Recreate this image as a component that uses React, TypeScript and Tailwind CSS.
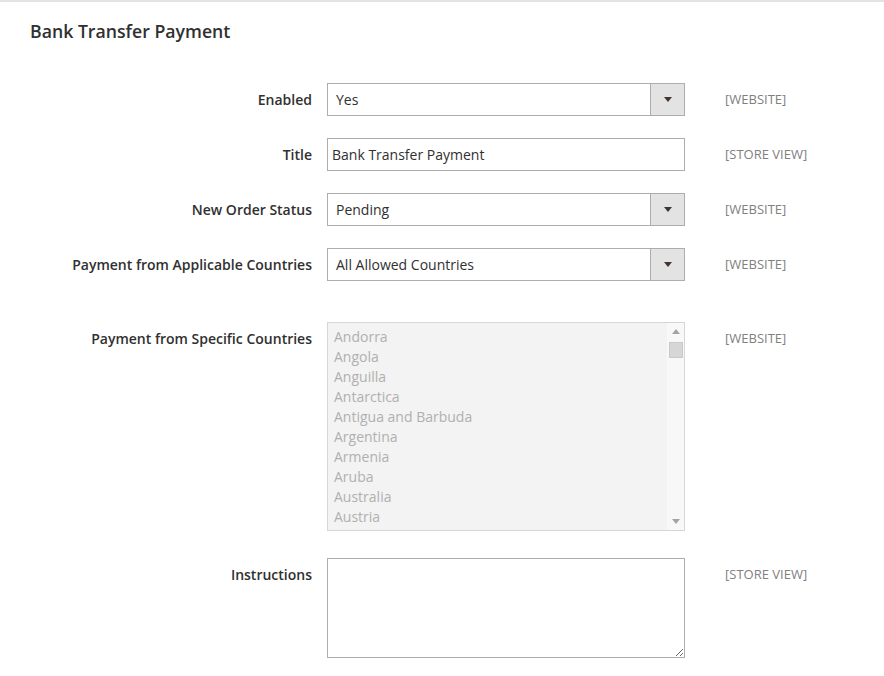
import React from "react";

const countries = [
  "Andorra",
  "Angola",
  "Anguilla",
  "Antarctica",
  "Antigua and Barbuda",
  "Argentina",
  "Armenia",
  "Aruba",
  "Australia",
  "Austria",
];

function Arrow({ up = false, className = "" }: { up?: boolean; className?: string }) {
  return (
    <svg width="8" height="5" viewBox="0 0 8 5" className={className}>
      <path d={up ? "M0 5 L4 0 L8 5 Z" : "M0 0 L8 0 L4 5 Z"} fill="currentColor" />
    </svg>
  );
}

function Select({ value }: { value: string }) {
  return (
    <div className="flex h-[33px] w-[358px] border border-[#adadad] bg-white">
      <div className="flex flex-1 items-center pl-[8px] text-[14px] text-[#303030]">{value}</div>
      <div className="flex w-[34px] items-center justify-center border-l border-[#adadad] bg-[#e3e3e3]">
        <Arrow className="text-[#41362f]" />
      </div>
    </div>
  );
}

function Row({
  label,
  scope,
  children,
  className = "",
}: {
  label: string;
  scope: string;
  children: React.ReactNode;
  className?: string;
}) {
  return (
    <div className={"grid grid-cols-[312px_358px_1fr] items-start " + className}>
      <div className="flex h-[33px] items-center justify-end text-[14px] font-semibold text-[#303030]">{label}</div>
      <div className="ml-[15px]">{children}</div>
      <div className="ml-[55px] flex h-[33px] items-center text-[13px] text-[#808080]">{scope}</div>
    </div>
  );
}

export default function App() {
  return (
    <div
      className="min-h-screen border-t-2 border-[#e3e3e3] bg-white"
      style={{ fontFamily: '"Open Sans", "Noto Sans", sans-serif' }}
    >
      <div className="pl-[30px] pt-[17px]">
        <h2 className="text-[17.7px] font-semibold leading-[24px] text-[#303030]">Bank Transfer Payment</h2>
      </div>

      <div className="mt-[40px] flex flex-col">
        <Row label="Enabled" scope="[WEBSITE]">
          <Select value="Yes" />
        </Row>
        <Row label="Title" scope="[STORE VIEW]" className="mt-[22px]">
          <div className="flex h-[33px] w-[358px] items-center border border-[#adadad] bg-white pl-[4px] text-[14px] text-[#303030]">
            Bank Transfer Payment
          </div>
        </Row>
        <Row label="New Order Status" scope="[WEBSITE]" className="mt-[22px]">
          <Select value="Pending" />
        </Row>
        <Row label="Payment from Applicable Countries" scope="[WEBSITE]" className="mt-[22px]">
          <Select value="All Allowed Countries" />
        </Row>
        <Row label="Payment from Specific Countries" scope="[WEBSITE]" className="mt-[41px]">
          <div className="relative h-[209px] w-[358px] overflow-hidden border border-[#d6d6d6] bg-[#f3f3f3]">
            <div className="pl-[6px] pt-[4px]">
              {countries.map((c) => (
                <div key={c} className="h-[20px] text-[14px] leading-[20px] text-[#b0b0b0]">
                  {c}
                </div>
              ))}
            </div>
            <div className="absolute right-0 top-0 flex h-full w-[17px] flex-col items-center bg-[#f8f8f8]">
              <Arrow up className="mt-[6px] text-[#a3a3a3]" />
              <div className="mt-[8px] h-[16px] w-[14px] border border-[#c9c9c9] bg-[#d6d6d6]" />
              <div className="flex-1" />
              <Arrow className="mb-[6px] text-[#a3a3a3]" />
            </div>
          </div>
        </Row>
        <Row label="Instructions" scope="[STORE VIEW]" className="mt-[27px]">
          <textarea className="block h-[100px] w-[358px] border border-[#adadad] bg-white outline-none" />
        </Row>
      </div>
    </div>
  );
}
